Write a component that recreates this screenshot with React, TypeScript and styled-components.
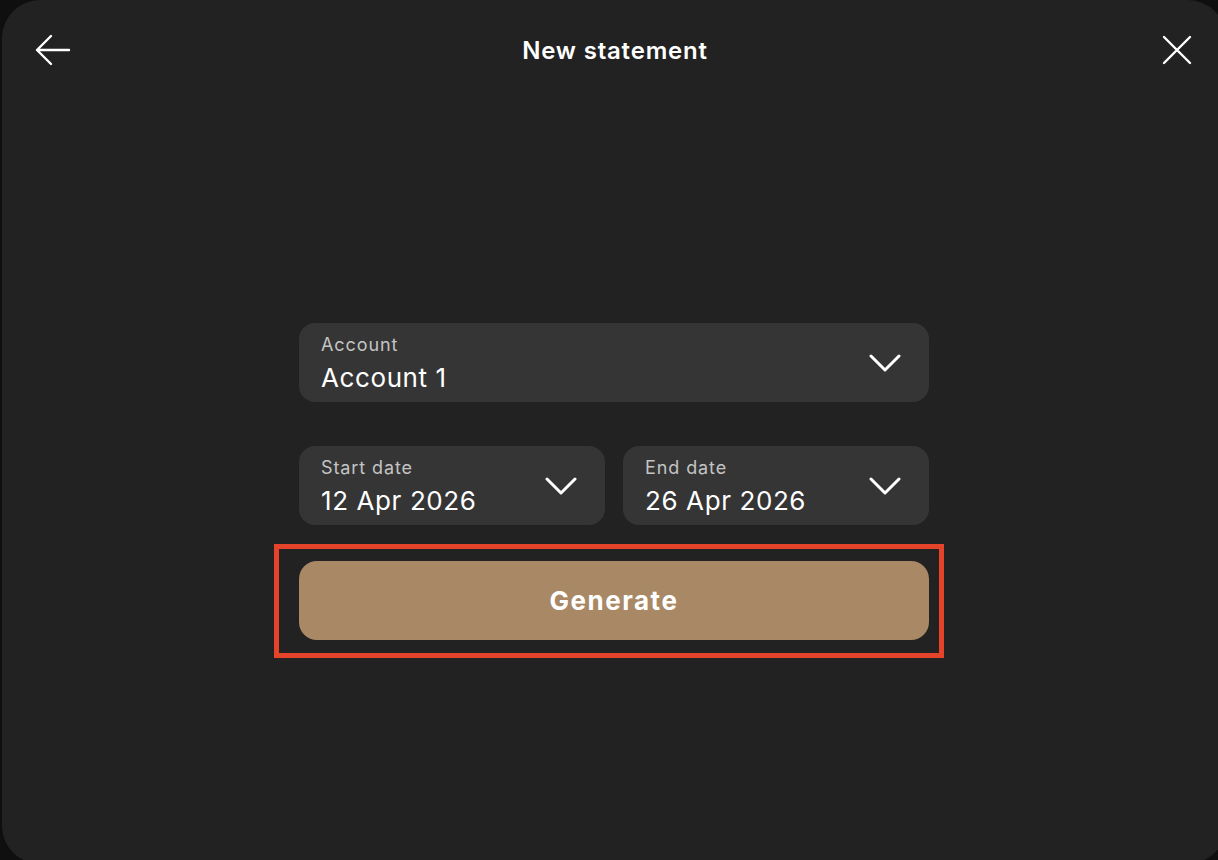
import React, { FC } from "react"
import styled, { createGlobalStyle } from "styled-components"

const GlobalStyle = createGlobalStyle`
  html, body {
    margin: 0;
    padding: 0;
    background: #0f0f0f;
    overflow: hidden;
  }
  body {
    font-family: Inter, "Noto Sans", "Liberation Sans", sans-serif;
    -webkit-font-smoothing: antialiased;
  }
`

const Sheet = styled.div`
  margin-left: 2px;
  width: 1224px;
  height: 864px;
  background: #222222;
  border-radius: 38px;
  display: flex;
  flex-direction: column;
  color: #ffffff;
`

const Header = styled.header`
  height: 100px;
  padding: 0 29px 0 31px;
  display: flex;
  align-items: center;
  justify-content: space-between;
`

const IconButton = styled.button`
  width: 40px;
  height: 40px;
  padding: 0;
  border: 0;
  background: none;
  color: #ffffff;
  display: flex;
  align-items: center;
  justify-content: center;
  cursor: pointer;
`

const Title = styled.h1`
  margin: 0;
  font-size: 24px;
  font-weight: 600;
  letter-spacing: 0.8px;
`

const Form = styled.form`
  width: 630px;
  margin: 223px auto 0;
  display: flex;
  flex-direction: column;
`

const DateRow = styled.div`
  margin-top: 44px;
  display: grid;
  grid-template-columns: 1fr 1fr;
  gap: 18px;
`

const Field = styled.div`
  height: 79px;
  box-sizing: border-box;
  padding: 0 28px 0 22px;
  background: #353535;
  border-radius: 16px;
  display: flex;
  align-items: center;
  justify-content: space-between;
  cursor: pointer;
`

const FieldText = styled.div`
  display: flex;
  flex-direction: column;
  gap: 8px;
`

const Label = styled.span`
  font-size: 18px;
  line-height: 22px;
  letter-spacing: 0.9px;
  color: #c4c4c4;
`

const Value = styled.span`
  font-size: 26px;
  line-height: 28px;
  letter-spacing: 0.6px;
  color: #ffffff;
`

const Highlight = styled.div`
  margin: 19px -15px 0 -25px;
  padding: 12px 10px 13px 20px;
  border: 5px solid #e5432a;
`

const Submit = styled.button`
  width: 100%;
  height: 79px;
  border: 0;
  border-radius: 18px;
  background: #a98866;
  color: #ffffff;
  font-family: inherit;
  font-size: 26px;
  font-weight: 700;
  letter-spacing: 1.5px;
  cursor: pointer;
`

const BackIcon: FC = () => (
  <svg width="36" height="32" viewBox="0 0 36 32" fill="none" stroke="currentColor" strokeWidth="2.4" strokeLinecap="round" strokeLinejoin="round">
    <path d="M2 16h32M16 2L2 16l14 14" />
  </svg>
)

const CloseIcon: FC = () => (
  <svg width="30" height="30" viewBox="0 0 30 30" fill="none" stroke="currentColor" strokeWidth="2.4" strokeLinecap="round">
    <path d="M2 2l26 26M28 2L2 28" />
  </svg>
)

const Chevron: FC = () => (
  <svg width="32" height="20" viewBox="0 0 32 20" fill="none" stroke="currentColor" strokeWidth="3" strokeLinecap="round" strokeLinejoin="round">
    <path d="M2 3l14 14L30 3" />
  </svg>
)

interface SelectProps {
  label: string
  value: string
}

const Select: FC<SelectProps> = ({ label, value }) => (
  <Field>
    <FieldText>
      <Label>{label}</Label>
      <Value>{value}</Value>
    </FieldText>
    <Chevron />
  </Field>
)

const App: FC = () => {
  return (
    <>
      <GlobalStyle />
      <Sheet>
        <Header>
          <IconButton aria-label="Back"><BackIcon /></IconButton>
          <Title>New statement</Title>
          <IconButton aria-label="Close"><CloseIcon /></IconButton>
        </Header>
        <Form onSubmit={(e) => e.preventDefault()}>
          <Select label="Account" value="Account 1" />
          <DateRow>
            <Select label="Start date" value="12 Apr 2026" />
            <Select label="End date" value="26 Apr 2026" />
          </DateRow>
          <Highlight>
            <Submit type="submit">Generate</Submit>
          </Highlight>
        </Form>
      </Sheet>
    </>
  )
}

export default App
